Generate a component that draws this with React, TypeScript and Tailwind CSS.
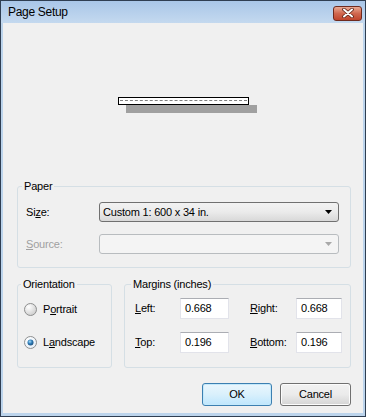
import React from "react";

const U = ({ c }: { c: string }) => <span className="underline underline-offset-[1px]">{c}</span>;

function Combo({ text, disabled }: { text?: string; disabled?: boolean }) {
  return (
    <div
      className={
        "flex-1 h-[20px] rounded-[3px] border flex items-center pl-[3px] pr-[6px] " +
        (disabled
          ? "border-[#b8bcbf] bg-[#f4f4f4]"
          : "border-[#707070] bg-gradient-to-b from-[#f2f2f2] via-[#ebebeb] to-[#d8d8d8]")
      }
    >
      <span className="flex-1 text-black leading-[14px]">{text}</span>
      <svg width="7" height="4" viewBox="0 0 7 4">
        <path d="M0 0 L7 0 L3.5 4 Z" fill={disabled ? "#a8a8a8" : "#000"} />
      </svg>
    </div>
  );
}

function Radio({ checked }: { checked?: boolean }) {
  return (
    <svg width="13" height="13" viewBox="0 0 13 13">
      <defs>
        <radialGradient id={checked ? "rgc" : "rgu"} cx="0.35" cy="0.3" r="0.8">
          <stop offset="0" stopColor="#ffffff" />
          <stop offset="1" stopColor={checked ? "#e3eef8" : "#c9c9c9"} />
        </radialGradient>
        <radialGradient id="dot" cx="0.4" cy="0.35" r="0.7">
          <stop offset="0" stopColor="#a5dcf8" />
          <stop offset="0.5" stopColor="#2e7cb8" />
          <stop offset="1" stopColor="#1b4d78" />
        </radialGradient>
      </defs>
      <circle cx="6.5" cy="6.5" r="6" fill={`url(#${checked ? "rgc" : "rgu"})`} stroke="#8e8f8f" strokeWidth="1" />
      {checked && <circle cx="6.5" cy="6.5" r="3" fill="url(#dot)" />}
    </svg>
  );
}

function Input({ value }: { value: string }) {
  return (
    <div className="h-[21px] bg-white border border-[#e2e3ea] border-t-[#abadb3] flex items-center pl-[4px] text-black">
      {value}
    </div>
  );
}

export default function App() {
  return (
    <div
      className="w-[366px] h-[417px] border border-[#2f3e52] bg-[#bcd4ec] flex flex-col text-[11px] tracking-[-0.2px] text-black"
      style={{ fontFamily: '"Liberation Sans", Arial, sans-serif' }}
    >
      {/* title bar */}
      <div className="h-[22px] flex items-center bg-gradient-to-b from-[#a9c6e8] to-[#c4d9ef] pl-[7px] pr-[3px]">
        <span className="flex-1 text-[12px] tracking-[-0.3px] text-black">Page Setup</span>
        <div className="w-[29px] h-[15px] mt-[2px] rounded-[3px] border border-[#6e2a1e] bg-gradient-to-b from-[#e9a993] via-[#d0674f] to-[#c0442c] flex items-center justify-center">
          <svg width="12" height="10" viewBox="0 0 12 10">
            <path d="M2 1.5 L10 8.5 M10 1.5 L2 8.5" stroke="#5a2015" strokeWidth="3.6" strokeLinecap="round" />
            <path d="M2 1.5 L10 8.5 M10 1.5 L2 8.5" stroke="#ffffff" strokeWidth="2" strokeLinecap="round" />
          </svg>
        </div>
      </div>
      {/* client */}
      <div className="flex-1 mx-[2px] mb-[3px] bg-[#f0f0f0] flex flex-col pl-[14px] pr-[12px]">
        <div className="h-[156px] pt-[74px] pl-[101px]">
          <div className="w-[131px] h-[8px] border border-black bg-white shadow-[8px_8px_0_#a0a0a0] px-[1px] pt-[2px]">
            <div className="border-t border-dashed border-[#808080]" />
          </div>
        </div>

        <fieldset className="border border-[#d5dfe5] rounded-[3px] pl-[8px] pr-[11px] pb-[13px]">
          <legend className="-ml-[4px] px-[2px] leading-[14px]">Paper</legend>
          <div className="mt-[9px] flex items-center">
            <span className="w-[73px]">Si<U c="z" />e:</span>
            <Combo text="Custom 1: 600 x 34 in." />
          </div>
          <div className="mt-[12px] flex items-center text-[#a0a0a0]">
            <span className="w-[73px]"><U c="S" />ource:</span>
            <Combo disabled />
          </div>
        </fieldset>

        <div className="mt-[9px] flex gap-[12px]">
          <fieldset className="w-[95px] border border-[#d5dfe5] rounded-[3px] pl-[6px] pb-[17px]">
            <legend className="-ml-[3px] px-[2px] leading-[14px]">Orientation</legend>
            <div className="mt-[10px] h-[16px] flex items-center gap-[6px]">
              <Radio />
              <span>P<U c="o" />rtrait</span>
            </div>
            <div className="mt-[17px] h-[16px] flex items-center gap-[6px]">
              <Radio checked />
              <span>L<U c="a" />ndscape</span>
            </div>
          </fieldset>
          <fieldset className="flex-1 border border-[#d5dfe5] rounded-[3px] pl-[10px] pr-[8px] pb-[14px]">
            <legend className="-ml-[4px] px-[2px] leading-[14px]">Margins (inches)</legend>
            <div className="mt-[7px] grid grid-cols-[45px_49px_21px_46px_1fr] gap-y-[13px] items-center">
              <span><U c="L" />eft:</span>
              <Input value="0.668" />
              <span />
              <span><U c="R" />ight:</span>
              <Input value="0.668" />
              <span><U c="T" />op:</span>
              <Input value="0.196" />
              <span />
              <span><U c="B" />ottom:</span>
              <Input value="0.196" />
            </div>
          </fieldset>
        </div>

        <div className="mt-[15px] flex justify-end gap-[8px] pr-[0px]">
          <button className="w-[70px] h-[23px] rounded-[3px] border border-[#3c7fb1] bg-gradient-to-b from-[#eaf6fd] via-[#d9f0fc] to-[#bee6fd] shadow-[inset_0_0_0_1px_#c4e9fb] text-black">
            OK
          </button>
          <button className="w-[71px] h-[23px] rounded-[3px] border border-[#707070] bg-gradient-to-b from-[#f2f2f2] via-[#ebebeb] to-[#d4d4d4] shadow-[inset_0_0_0_1px_#fcfcfc] text-black">
            Cancel
          </button>
        </div>
      </div>
    </div>
  );
}
